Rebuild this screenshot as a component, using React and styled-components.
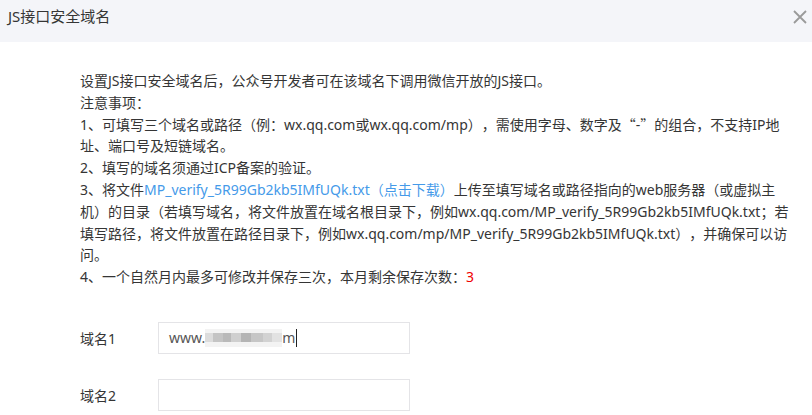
import styled, { createGlobalStyle } from "styled-components";

const GlobalStyle = createGlobalStyle`
  body {
    margin: 0;
    background: #ffffff;
    font-family: "Noto Sans", "Noto Sans CJK SC", sans-serif;
    color: #353535;
    text-spacing-trim: space-all;
  }
`;

const CloseIcon = () => (
  <svg width="14" height="14" viewBox="0 0 14 14">
    <path d="M1 1L13 13M13 1L1 13" stroke="#9a9a9a" strokeWidth="1.8" fill="none" />
  </svg>
);

const App = () => {
  return (
    <Dialog>
      <GlobalStyle />
      <Header>
        <Title>JS接口安全域名</Title>
        <CloseButton>
          <CloseIcon />
        </CloseButton>
      </Header>
      <Body>
        <Notice>
          <Line>设置JS接口安全域名后，公众号开发者可在该域名下调用微信开放的JS接口。</Line>
          <Line>注意事项：</Line>
          <Line>
            1、可填写三个域名或路径（例：wx.qq.com或wx.qq.com/mp），需使用字母、数字及<Quote>“</Quote>-<Quote>”</Quote>的组合，不支持IP地址、端口号及短链域名。
          </Line>
          <Line>2、填写的域名须通过ICP备案的验证。</Line>
          <Line>
            3、将文件<Link>MP_verify_5R99Gb2kb5IMfUQk.txt（点击下载）</Link>
            上传至填写域名或路径指向的web服务器（或虚拟主机）的目录（若填写域名，将文件放置在域名根目录下，例如wx.qq.com/MP_verify_5R99Gb2kb5IMfUQk.txt；若填写路径，将文件放置在路径目录下，例如wx.qq.com/mp/MP_verify_5R99Gb2kb5IMfUQk.txt），并确保可以访问。
          </Line>
          <Line>
            4、一个自然月内最多可修改并保存三次，本月剩余保存次数：<Count>3</Count>
          </Line>
        </Notice>
        <Form>
          <FormRow>
            <Label>域名1</Label>
            <InputBox>
              www.
              <Masked>
                <Pixel $shade="#dcdcdc" $w={8} />
                <Pixel $shade="#c4c4c4" $w={10} />
                <Pixel $shade="#b9b9b9" $w={8} />
                <Pixel $shade="#cfcfcf" $w={10} />
                <Pixel $shade="#b4b4b4" $w={10} />
                <Pixel $shade="#c6c6c6" $w={12} />
                <Pixel $shade="#d2d2d2" $w={9} />
                <Pixel $shade="#e2e2e2" $w={10} />
              </Masked>
              m<Caret />
            </InputBox>
          </FormRow>
          <FormRow>
            <Label>域名2</Label>
            <InputBox />
          </FormRow>
        </Form>
      </Body>
    </Dialog>
  );
};

export default App;

const Dialog = styled.div`
  width: 812px;
  height: 415px;
  overflow: hidden;
  background: #ffffff;
`;

const Header = styled.div`
  height: 42px;
  background-color: #f4f5f9;
  display: flex;
  justify-content: space-between;
  align-items: flex-start;
  padding: 0 2px 0 8px;
  box-sizing: border-box;
`;

const Title = styled.span`
  font-size: 15px;
  line-height: 33px;
  color: #353535;
`;

const CloseButton = styled.span`
  display: flex;
  align-items: center;
  justify-content: center;
  width: 20px;
  height: 33px;
`;

const Body = styled.div`
  padding: 28px 0 0 80px;
`;

const Notice = styled.div`
  width: 710px;
  font-size: 14px;
  line-height: 21.8px;
  color: #353535;
`;

const Line = styled.div``;

const Quote = styled.span`
  font-family: "Noto Sans CJK SC", sans-serif;
  font-feature-settings: "fwid" 1;
`;

const Link = styled.span`
  color: #459ae9;
`;

const Count = styled.span`
  color: #f00000;
`;

const Form = styled.div`
  display: flex;
  flex-direction: column;
  gap: 25px;
  margin-top: 34px;
`;

const FormRow = styled.div`
  display: flex;
  align-items: center;
`;

const Label = styled.span`
  width: 78px;
  font-size: 14px;
  color: #353535;
`;

const InputBox = styled.div`
  width: 252px;
  height: 32px;
  box-sizing: border-box;
  border: 1px solid #e4e4e7;
  display: flex;
  align-items: center;
  padding-left: 10px;
  font-size: 14px;
  color: #555555;
`;

const Masked = styled.span`
  display: inline-flex;
  align-items: center;
  height: 18px;
  background: #f3f3f3;
`;

const Pixel = styled.span`
  display: inline-block;
  width: ${(p) => p.$w}px;
  height: 9px;
  background: ${(p) => p.$shade};
`;

const Caret = styled.span`
  display: inline-block;
  width: 1px;
  height: 18px;
  margin-left: 1px;
  background: #222222;
`;
